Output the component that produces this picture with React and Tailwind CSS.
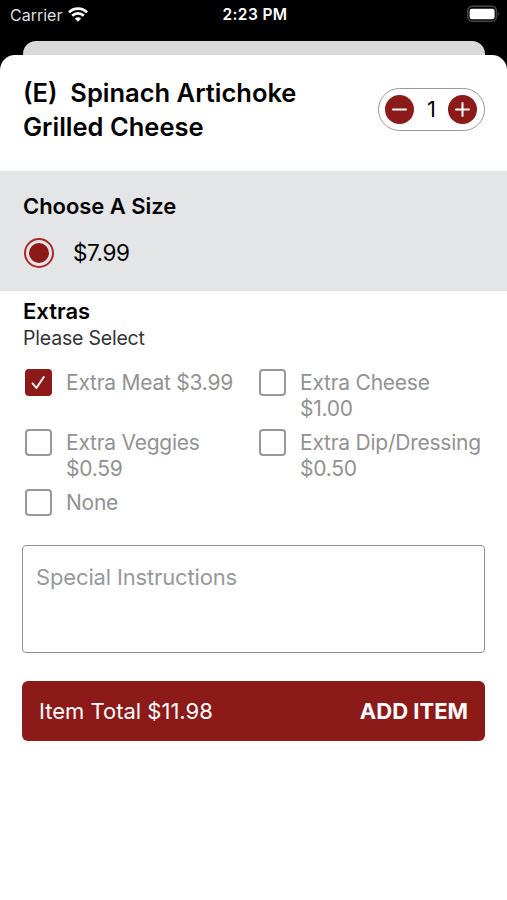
// App.jsx
// Menu item sheet: size, extras, special instructions and the item total.

import { useState } from "react";

const EXTRAS = [
  { name: "Extra Meat", price: 3.99 },
  { name: "Extra Cheese", price: 1.0 },
  { name: "Extra Veggies", price: 0.59 },
  { name: "Extra Dip/Dressing", price: 0.5 },
  { name: "None", price: 0 },
];

const BASE_PRICE = 7.99;

function StatusBar() {
  return (
    <div className="grid h-[41px] grid-cols-[1fr_auto_1fr] items-start pt-[5px] pr-[7px] pl-[10px] text-[15.5px] leading-5 text-white">
      <div className="flex h-5 items-center gap-[6px]">
        <span className="text-[16px] text-[#dedede]">Carrier</span>
        <svg className="mb-px" width="20" height="15" viewBox="0 0 20 15" fill="none" stroke="currentColor" strokeWidth="2.7">
          <path d="M1 5.4a12.7 12.7 0 0 1 18 0" />
          <path d="M4.2 8.7a8.2 8.2 0 0 1 11.6 0" />
          <path d="M10 14.8 6.9 11.7a4.5 4.5 0 0 1 6.2 0z" fill="currentColor" stroke="none" />
        </svg>
      </div>
      <span className="font-semibold tracking-[0.4px] whitespace-nowrap">2:23 PM</span>
      <svg className="justify-self-end" width="33" height="18" viewBox="0 0 33 18">
        <rect x="0.8" y="1.3" width="28.6" height="15" rx="4.5" fill="none" stroke="#444" strokeWidth="1.5" />
        <rect x="2.6" y="3.8" width="25" height="10.4" rx="2.2" fill="#fff" />
        <path d="M31 6.9c1.4.8 1.4 3.2 0 4z" fill="#444" />
      </svg>
    </div>
  );
}

function StepButton({ label, path, onClick }) {
  return (
    <button type="button" aria-label={label} onClick={onClick} className="grid size-[29px] place-items-center rounded-full bg-[#8b1a18]">
      <svg width="15" height="15" viewBox="0 0 15 15" fill="none" stroke="#fff" strokeWidth="2" strokeLinecap="round">
        <path d={path} />
      </svg>
    </button>
  );
}

function Extra({ item, checked, onToggle }) {
  return (
    <button type="button" role="checkbox" aria-checked={checked} onClick={onToggle} className="flex items-start gap-[14px] text-left">
      <span
        className={`grid size-[27px] shrink-0 place-items-center rounded-[4px] border-2 ${
          checked ? "border-[#8b1a18] bg-[#8b1a18]" : "border-[#98989a] bg-white"
        }`}
      >
        {checked && (
          <svg width="15" height="15" viewBox="0 0 15 15" fill="none" stroke="#fff" strokeWidth="1.9" strokeLinecap="round" strokeLinejoin="round">
            <path d="M1.5 8.4 5.4 13 12.8 2" />
          </svg>
        )}
      </span>
      <span className="pt-px text-[21px] leading-[26px] tracking-[-0.24px] text-[#929294]">
        {item.name}
        {item.price > 0 && ` $${item.price.toFixed(2)}`}
      </span>
    </button>
  );
}

export default function App() {
  const [qty, setQty] = useState(1);
  const [picked, setPicked] = useState(["Extra Meat"]);

  const toggle = (name) =>
    setPicked((p) => (p.includes(name) ? p.filter((n) => n !== name) : [...p, name]));

  const extras = EXTRAS.filter((e) => picked.includes(e.name)).reduce((sum, e) => sum + e.price, 0);
  const total = (BASE_PRICE + extras) * qty;

  return (
    <div className="flex h-[900px] w-[507px] flex-col overflow-hidden bg-black font-['Inter','Liberation_Sans',sans-serif] text-black">
      <StatusBar />
      <div className="mr-[22px] ml-[23px] h-[14px] shrink-0 rounded-t-[13px] bg-[#d9d9d9]" />

      <main className="flex-1 rounded-t-[15px] bg-white">
        {/* Title + quantity */}
        <header className="flex h-[116px] items-start justify-between pt-[21px] pr-[22px] pl-[23px]">
          <h1 className="text-[25.5px] leading-[34px] font-[560] whitespace-pre">
            {"(E)  Spinach Artichoke\nGrilled Cheese"}
          </h1>
          <div className="mt-3 flex h-[43px] w-[107px] items-center justify-between rounded-full border-[1.5px] border-[#97979c] pr-[7px] pl-[6px]">
            <StepButton label="Less" path="M1 7.5h13" onClick={() => setQty((q) => Math.max(1, q - 1))} />
            <span className="pl-px text-[22px]">{qty}</span>
            <StepButton label="More" path="M1 7.5h13M7.5 1v13" onClick={() => setQty((q) => q + 1)} />
          </div>
        </header>

        {/* Size */}
        <section className="h-[120px] bg-[#e4e5e7] px-[23px] pt-5">
          <h2 className="text-[22px] leading-[30px] font-semibold tracking-[-0.05px]">Choose A Size</h2>
          <div className="mt-[17px] flex items-center gap-[19px] pl-px">
            <span className="grid size-[30px] place-items-center rounded-full border-2 border-[#a82a28]">
              <span className="size-5 rounded-full bg-[#8b1a18]" />
            </span>
            <span className="text-[22.5px] leading-[30px] tracking-[-0.4px]">$7.99</span>
          </div>
        </section>

        {/* Extras */}
        <section className="px-[23px] pt-[6px]">
          <h2 className="text-[22px] leading-[28px] font-semibold">Extras</h2>
          <p className="text-[19.5px] leading-[26px] tracking-[-0.2px] text-[#333]">Please Select</p>
          <div className="mt-[18px] grid auto-rows-[60px] grid-cols-[234px_1fr] pl-[2px]">
            {EXTRAS.map((item) => (
              <Extra key={item.name} item={item} checked={picked.includes(item.name)} onToggle={() => toggle(item.name)} />
            ))}
          </div>
        </section>

        {/* Instructions + total */}
        <div className="px-[22px]">
          <textarea
            placeholder="Special Instructions"
            className="-mt-[4px] block h-[108px] w-full resize-none rounded-[4px] border-[1.5px] border-[#8f8f92] px-[13px] pt-[17px] text-[22px] leading-[28px] tracking-[-0.15px] placeholder:text-[#98989b]"
          />
          <button type="button" className="mt-7 flex h-[60px] w-full items-center justify-between rounded-[6px] bg-[#8b1a18] px-[17px] text-[22px] text-white">
            <span>Item Total ${total.toFixed(2)}</span>
            <span className="font-bold">ADD ITEM</span>
          </button>
        </div>
      </main>
    </div>
  );
}
